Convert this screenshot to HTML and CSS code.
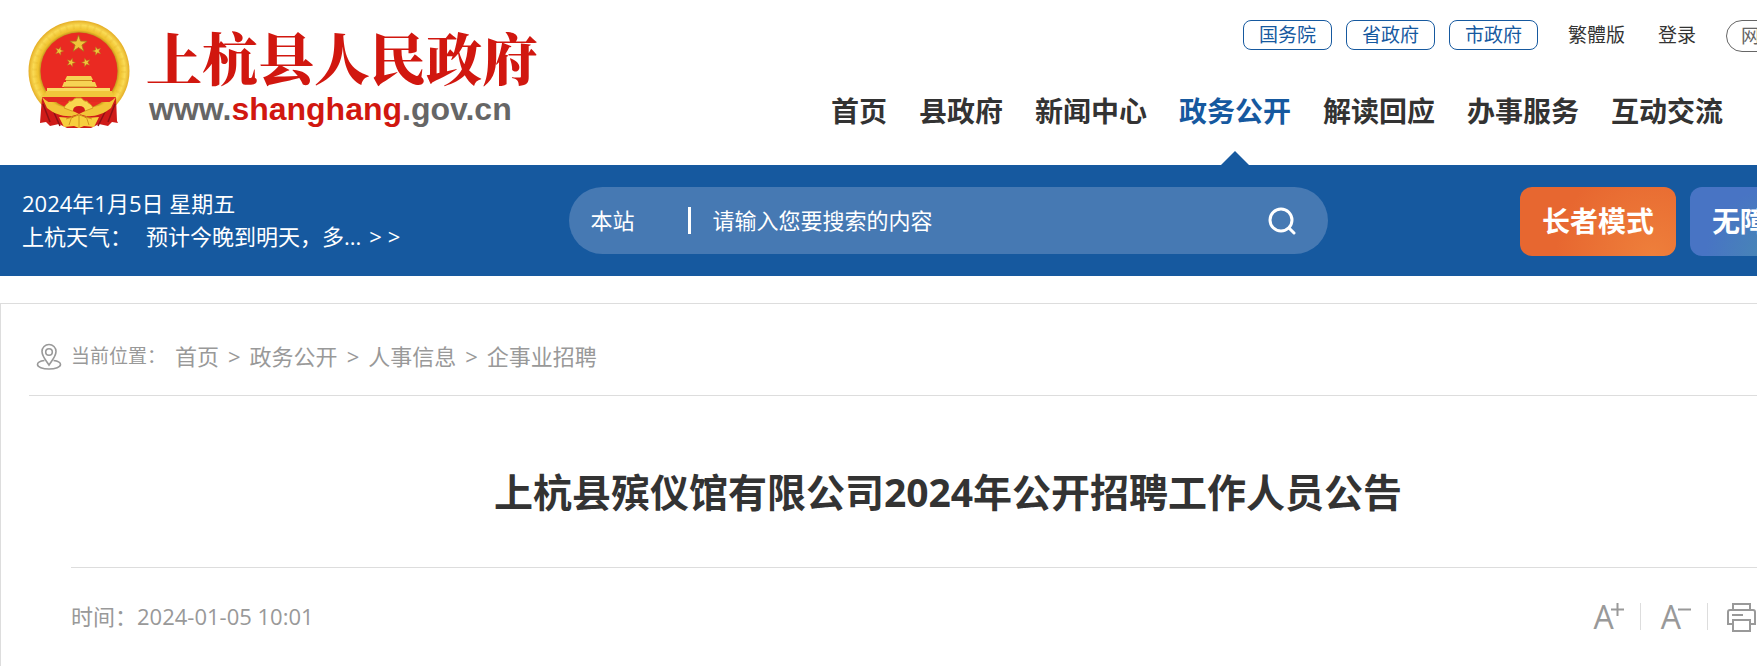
FILE: index.html
```html
<!DOCTYPE html>
<html lang="zh-CN">
<head>
<meta charset="utf-8">
<title>上杭县殡仪馆有限公司2024年公开招聘工作人员公告</title>
<link rel="stylesheet" href="styles.css">
</head>
<body>
<div class="page">
  <header class="header">
    <a class="logo" href="#">
      <svg class="emblem" viewBox="0 0 102 108" aria-hidden="true">
        <defs>
          <radialGradient id="gold" cx="51" cy="51" r="51" gradientUnits="userSpaceOnUse">
            <stop offset=".74" stop-color="#b98a1c"/>
            <stop offset=".8" stop-color="#efc02c"/>
            <stop offset=".9" stop-color="#fadb55"/>
            <stop offset="1" stop-color="#e2a81f"/>
          </radialGradient>
          <path id="star" d="M0-9 2.1-2.9 8.6-2.8 3.4 1.1 5.3 7.3 0 3.6-5.3 7.3-3.4 1.1-8.6-2.8-2.1-2.9Z"/>
        </defs>
        <circle cx="51" cy="51" r="50.5" fill="url(#gold)"/>
        <circle cx="51" cy="51" r="44.5" fill="none" stroke="#d9a11c" stroke-width="5" stroke-dasharray="2 5" opacity=".15"/>
        <circle cx="51" cy="51" r="38.5" fill="#ea2a22"/>
        <g fill="#f0c53a" stroke="#a8761a" stroke-width=".8">
          <use href="#star" x="50.5" y="24"/>
          <use href="#star" transform="translate(31.3 31) rotate(18) scale(.5)"/>
          <use href="#star" transform="translate(69 31) rotate(-18) scale(.5)"/>
          <use href="#star" transform="translate(43 42.5) rotate(18) scale(.5)"/>
          <use href="#star" transform="translate(58 42.5) rotate(-18) scale(.5)"/>
        </g>
        <path d="M39 56h24l2 4H37ZM38 60h26v2h3l2 5H34l2-5h2Z" fill="#f6d354"/>
        <path d="M38 60.5h26M36 67h31" stroke="#c88b1c"/>
        <path d="M19 68h63v3H19Z" fill="#f9dc62"/>
        <path d="M18 71h66l2 6H16Z" fill="#f1c63b"/>
        <path d="M14 77h74v5H14Z" fill="#e12a20"/>
        <path d="M14 77c7 8 17 14 37 15 20-1 30-7 37-15l1 24 1 2-6-1-4 4-9-2-8 4H39l-8-4-9 2-4-4-6 1Z" fill="#cf1b19"/>
        <path d="m15 84 7 18m2-14 8 18m38 0 9-18m1 14 7-18" stroke="#8f1115" stroke-width="1.5"/>
        <path d="M14 77c9 9 19 9 27 11l10 5 10-5c8-2 18-2 27-11l-5 11c-7 6-17 9-25 8l-7-2-7 2c-8 1-18-2-25-8Z" fill="#f2c437"/>
        <path d="m31 97 13 1 7-4 7 4 13-1-5 10-10-1-5 2-5-2-10 1Z" fill="#f7cf3e"/>
        <path d="M36 88c2-5 5-4 5-7 4 1 4-2 7-3h5c2 1 3 4 6 3 1 3 4 2 6 7l-8 3H44Z" fill="#f9d74f" stroke="#d39b22"/>
        <path d="M45 91q0-5 6-5t6 5l-6 3Z" fill="#cf1b19"/>
        <path d="m38 99 13-4 13 4m-13-4v12m-7-11-3 9m17-9 3 9" fill="none" stroke="#d0951e"/>
      </svg>
      <span class="logo-text">
        <span class="logo-name">上杭县人民政府</span>
        <span class="logo-url">www.<b class="logo-host">shanghang</b>.gov.cn</span>
      </span>
    </a>
    <div class="header-side">
      <div class="top-links">
        <a class="pill" href="#">国务院</a>
        <a class="pill" href="#">省政府</a>
        <a class="pill" href="#">市政府</a>
        <a class="top-link top-link-first" href="#">繁體版</a>
        <a class="top-link" href="#">登录</a>
        <a class="ipv6" href="#">网站支持IPv6</a>
      </div>
      <nav class="nav">
        <a href="#">首页</a>
        <a href="#">县政府</a>
        <a href="#">新闻中心</a>
        <a class="active" href="#">政务公开</a>
        <a href="#">解读回应</a>
        <a href="#">办事服务</a>
        <a href="#">互动交流</a>
      </nav>
    </div>
  </header>

  <div class="band">
    <div class="weather">
      <div>2024年1月5日 星期五</div>
      <div class="forecast"><span>上杭天气：</span><span>预计今晚到明天，多...</span><a href="#">&gt; &gt;</a></div>
    </div>
    <form class="search">
      <select class="scope" aria-label="搜索范围"><option>本站</option></select>
      <input class="query" type="text" placeholder="请输入您要搜索的内容" aria-label="搜索内容">
      <button class="go" type="button" aria-label="搜索">
        <svg viewBox="0 0 28 28" width="28" height="28" fill="none" stroke="#fff" stroke-width="3" stroke-linecap="round"><circle cx="13" cy="13" r="11"/><path d="m21 21 5 5"/></svg>
      </button>
    </form>
    <div class="modes">
      <button class="mode elder" type="button">长者模式</button>
      <button class="mode access" type="button">无障碍浏览</button>
    </div>
  </div>

  <main class="panel">
    <nav class="crumbs">
      <svg class="pin" viewBox="0 0 26 28" fill="none" stroke="#999" stroke-width="1.6"><path d="M13 22C9 16 6 13 6 8.500a7 7 0 0 1 14 0C20 13 17 16 13 22Z"/><circle cx="13" cy="9" r="3.300"/><path d="M8.500 17.500C4 18 1.500 19.500 1.500 21.500c0 2.500 5 4.500 11.500 4.500s11.500-2 11.500-4.500c0-2-2.500-3.500-7-4"/></svg>
      <span class="crumb-label">当前位置：</span>
      <a href="#">首页</a><span>&gt;</span>
      <a href="#">政务公开</a><span>&gt;</span>
      <a href="#">人事信息</a><span>&gt;</span>
      <a href="#">企事业招聘</a>
    </nav>
    <article class="article">
      <h1 class="title">上杭县殡仪馆有限公司2024年公开招聘工作人员公告</h1>
      <div class="meta">
        <div>时间：2024-01-05 10:01</div>
        <div class="tools">
          <button class="tool" type="button" aria-label="放大字号">A<svg class="sign" viewBox="0 0 13 13" stroke="#999" stroke-width="2"><path d="M6.500 0v13M0 6.500h13"/></svg></button>
          <button class="tool" type="button" aria-label="缩小字号">A<svg class="sign" viewBox="0 0 13 13" stroke="#999" stroke-width="2"><path d="M0 6.500h13"/></svg></button>
          <button class="tool print" type="button" aria-label="打印">
            <svg viewBox="0 0 30 30" width="30" height="30" fill="none" stroke="#999" stroke-width="2"><path d="M7 8V2h17v6M7 22H2V10q0-2 2-2h23q2 0 2 2v12h-5M7 18h17v11H7ZM6 13h11"/></svg>
          </button>
        </div>
      </div>
    </article>
  </main>
</div>
</body>
</html>
```
FILE: styles.css
```css
* {
  box-sizing: border-box;
}

body {
  margin: 0;
  overflow-x: hidden;
  background: #fff;
  color: #333;
  font: 22px/33px "Open Sans", "Noto Sans CJK SC", sans-serif;
}

a {
  color: inherit;
  text-decoration: none;
}

button,
input,
select {
  margin: 0;
  padding: 0;
  border: 0;
  background: none;
  color: inherit;
  font: inherit;
}

.page {
  display: flex;
  flex-direction: column;
  min-width: 1896px;
  min-height: 100vh;
}

/* Header */
.header {
  display: flex;
  justify-content: space-between;
  height: 165px;
  padding: 20px 22px 0 28px;
}

.logo {
  display: flex;
  gap: 16px;
}

.emblem {
  width: 102px;
  height: 108px;
}

.logo-text {
  display: flex;
  flex-direction: column;
  padding-top: 4px;
}

.logo-name {
  color: #d1170f;
  font-family: "Noto Serif CJK SC", "Noto Sans CJK SC", serif;
  font-size: 56px;
  font-weight: 900;
  line-height: 64px;
}

.logo-url {
  padding-left: 3px;
  color: #666;
  font-family: "Liberation Sans", Arial, sans-serif;
  font-size: 32px;
  font-weight: 700;
  line-height: 42px;
}

.logo-host {
  color: #d1170f;
}

.header-side {
  display: flex;
  flex-direction: column;
}

.top-links {
  display: flex;
  justify-content: flex-end;
  gap: 14px;
  font-size: 19px;
  line-height: 28px;
}

.pill {
  width: 89px;
  height: 30px;
  border: 1px solid #16599f;
  border-radius: 8px;
  color: #16599f;
  text-align: center;
}

.top-link {
  margin-right: 16px;
  line-height: 30px;
}

.top-link-first {
  margin-right: 19px;
  margin-left: 16px;
}

.ipv6 {
  width: 148px;
  height: 32px;
  border: 1px solid #666;
  border-radius: 16px;
  color: #666;
  line-height: 30px;
  padding-left: 14px;
  white-space: nowrap;
}

.nav {
  display: flex;
  gap: 32px;
  flex: 1;
  justify-content: flex-end;
  padding: 38px 151px 0 0;
  font-size: 28px;
  font-weight: 700;
  line-height: 42px;
}

.nav a {
  position: relative;
}

.nav .active {
  color: #16599f;
}

.nav .active::after {
  content: "";
  position: absolute;
  bottom: 0;
  left: 50%;
  margin-left: -14px;
  border: 14px solid transparent;
  border-top: 0;
  border-bottom-color: #16599f;
}

/* Blue band */
.band {
  display: grid;
  grid-template-columns: 1fr 759px 1fr;
  align-items: start;
  padding: 22px 22px 20px;
  background: #16599f;
  color: #fff;
}

.forecast {
  display: flex;
  gap: 14px;
}

.forecast a {
  margin-left: -6px;
}

.search {
  display: flex;
  align-items: center;
  height: 67px;
  padding: 0 32px 0 22px;
  border-radius: 34px;
  background: #4679b3;
}

.scope {
  width: 97px;
  appearance: none;
}

.query {
  flex: 1;
  height: 27px;
  padding-left: 22px;
  border-left: 3px solid #fff;
}

.query::placeholder {
  color: #fff;
  opacity: 1;
}

.go {
  display: flex;
}

.modes {
  display: flex;
  justify-content: flex-end;
  gap: 14px;
}

.mode {
  height: 69px;
  padding: 0 22px;
  border-radius: 12px;
  font-size: 28px;
  font-weight: 700;
}

.elder {
  background: radial-gradient(circle at 85% 100%, #ee7f3b, #e76730 65%);
}

.access {
  background: radial-gradient(circle at 45% 100%, #4788b4, #4874c4 55%);
}

/* Content panel */
.panel {
  flex: 1;
  margin-top: 27px;
  padding: 0 28px;
  border: 1px solid #ddd;
  border-bottom: 0;
}

.crumbs {
  display: flex;
  align-items: center;
  gap: 9px;
  height: 92px;
  padding: 14px 0 0 7px;
  border-bottom: 1px solid #ddd;
  color: #999;
}

.pin {
  width: 26px;
  height: 28px;
}

.crumb-label {
  width: 95px;
  font-size: 19px;
}

.article {
  padding: 0 42px;
}

.title {
  margin: 0;
  padding: 66px 0 46px;
  border-bottom: 1px solid #ddd;
  font-size: 39px;
  line-height: 59px;
  text-align: center;
}

.meta {
  display: flex;
  justify-content: space-between;
  align-items: center;
  padding-top: 32px;
  color: #999;
}

.tools {
  display: flex;
  align-items: center;
  margin-right: 53px;
}

.tool {
  display: flex;
  height: 27px;
  padding: 0 16px 0 20px;
  border-left: 1px solid #ddd;
  font-size: 32px;
  line-height: 27px;
}

.tool:first-child {
  border-left: 0;
}

.sign {
  width: 13px;
  height: 13px;
  margin-left: -3px;
}

.print {
  align-items: center;
  padding-left: 18px;
}
```
